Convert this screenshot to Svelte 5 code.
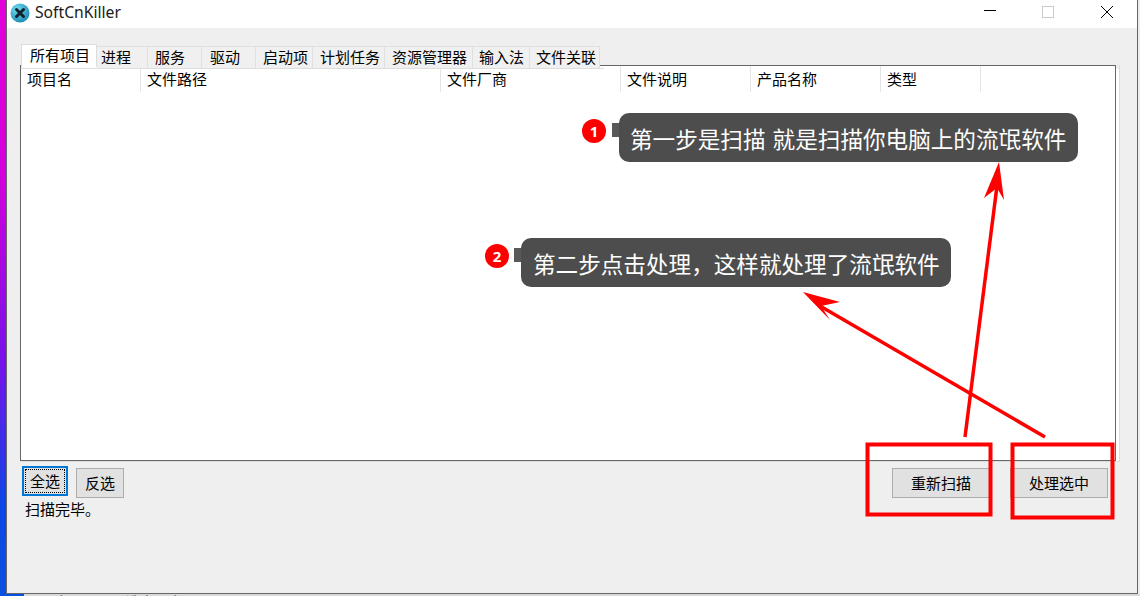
<script>
  const tabs = [
    { label: '所有项目', width: 76, pad: 8, active: true },
    { label: '进程', width: 51, pad: 4 },
    { label: '服务', width: 54, pad: 7 },
    { label: '驱动', width: 54, pad: 8 },
    { label: '启动项', width: 57, pad: 7 },
    { label: '计划任务', width: 72, pad: 7 },
    { label: '资源管理器', width: 88, pad: 7 },
    { label: '输入法', width: 57, pad: 6 },
    { label: '文件关联', width: 70, pad: 6 }
  ];

  const columns = [
    { label: '项目名', width: 120 },
    { label: '文件路径', width: 300 },
    { label: '文件厂商', width: 180 },
    { label: '文件说明', width: 130 },
    { label: '产品名称', width: 130 },
    { label: '类型', width: 100 }
  ];
</script>

<div class="screen">
  <div class="desktop">
    <div class="wallpaper"></div>
    <div class="window">
      <header class="titlebar">
        <div class="title">
          <svg class="app-icon" viewBox="0 0 20 20" aria-hidden="true">
            <defs>
              <radialGradient id="ball" cx="0.35" cy="0.3" r="0.8">
                <stop offset="0" stop-color="#6fdcf0" />
                <stop offset="1" stop-color="#1585ad" />
              </radialGradient>
            </defs>
            <circle cx="10" cy="10" r="9.5" fill="url(#ball)" />
            <path d="M6.5 6.5l7 7m0-7l-7 7" stroke="#14202e" stroke-width="3" stroke-linecap="round" />
          </svg>
          <span>SoftCnKiller</span>
        </div>
        <div class="controls">
          <button type="button" aria-label="最小化">
            <svg viewBox="0 0 14 14"><path d="M1 5.5h12" stroke="#000" fill="none" /></svg>
          </button>
          <button type="button" aria-label="最大化">
            <svg viewBox="0 0 14 14"><rect x="1.5" y="1.5" width="11" height="11" stroke="#ccc" fill="none" /></svg>
          </button>
          <button type="button" aria-label="关闭">
            <svg viewBox="0 0 14 14"><path d="M1 1l12 12M13 1L1 13" stroke="#000" fill="none" /></svg>
          </button>
        </div>
      </header>

      <div class="content">
        <div class="tabs">
          {#each tabs as tab}
            <div class="tab" class:active={tab.active} style:width="{tab.width}px" style:padding-left="{tab.pad}px">{tab.label}</div>
          {/each}
        </div>

        <div class="pane">
          <div class="list">
            <div class="list-head">
              {#each columns as col}
                <div class="col" style:width="{col.width}px">{col.label}</div>
              {/each}
            </div>
          </div>
        </div>

        <div class="actions">
          <button type="button" class="btn small focused"><span>全选</span></button>
          <button type="button" class="btn small">反选</button>
          <button type="button" class="btn wide push">重新扫描</button>
          <button type="button" class="btn wide">处理选中</button>
        </div>
        <div class="status">扫描完毕。</div>
      </div>
    </div>
    <div class="edge"></div>
  </div>

  <div class="explorer">
    <div class="explorer-side"></div>
    <div class="explorer-text">
      <span class="count">0 个项目</span>
      <span class="picked">选中 1 个项目</span>
      <span>2.27 MB</span>
    </div>
  </div>

  <svg class="marks" viewBox="0 0 1140 596" aria-hidden="true">
    <rect x="867.5" y="444.5" width="123" height="70" />
    <rect x="1012.5" y="444.5" width="100" height="73" />
    <path d="M965 437L997 186" />
    <path d="M1045 437L820 306" />
    <polygon class="head" points="999,162 1004,200 997,188 984,198" />
    <polygon class="head" points="803,292 840,302 821,306 830,320" />
  </svg>

  <div class="tip tip-one">
    <span class="badge">1</span>
    <span class="nub"></span>
    <span class="bubble">第一步是扫描 就是扫描你电脑上的流氓软件</span>
  </div>
  <div class="tip tip-two">
    <span class="badge">2</span>
    <span class="nub"></span>
    <span class="bubble">第二步点击处理，这样就处理了流氓软件</span>
  </div>
</div>

<style>
  :global(body) {
    margin: 0;
    overflow: hidden;
  }

  .screen {
    position: relative;
    width: 1140px;
    height: 596px;
    overflow: hidden;
    font-family: "Noto Sans CJK SC", "Noto Sans", sans-serif;
    font-size: 15px;
    color: #000;
  }

  .desktop {
    display: flex;
    height: 594px;
  }

  .wallpaper {
    width: 6px;
    background: linear-gradient(180deg, #e300d8 0%, #d200dc 30%, #7a10e8 60%, #0d46e6 85%, #0a50e0 100%);
  }

  .edge {
    flex: 1;
    background: #ececec;
  }

  .window {
    width: 1132px;
    box-sizing: border-box;
    display: flex;
    flex-direction: column;
    background: #efefef;
    border: 1px solid #666;
    border-width: 0 1px 1px 1px;
  }

  .titlebar {
    height: 28px;
    display: flex;
    justify-content: space-between;
    background: #fff;
  }

  .title {
    display: flex;
    align-items: center;
    gap: 5px;
    padding-left: 3px;
    font-family: "Noto Sans", sans-serif;
    font-size: 15.7px;
    line-height: 26px;
    color: #1a1a1a;
  }

  .app-icon {
    width: 20px;
    height: 20px;
    margin-top: -3px;
  }

  .title span {
    margin-top: -4px;
  }

  .controls {
    display: flex;
    padding-right: 1px;
  }

  .controls button {
    width: 58.5px;
    padding: 5px 0 0;
    border: 0;
    background: none;
    display: flex;
    justify-content: center;
  }

  .controls svg {
    width: 14px;
    height: 14px;
  }

  .content {
    flex: 1;
    display: flex;
    flex-direction: column;
    padding: 16px 0 0 13px;
  }

  .tabs {
    position: relative;
    z-index: 1;
    display: flex;
    align-items: flex-end;
    height: 25px;
    width: 583px;
    margin-left: 1px;
    box-sizing: border-box;
    border-bottom: 1px solid #ddd;
  }

  .tab {
    box-sizing: border-box;
    height: 22px;
    line-height: 20px;
    background: #f0f0f0;
    border: 1px solid #e0e0e0;
    border-width: 1px 1px 0 0;
    white-space: nowrap;
    overflow: hidden;
  }

  .tab.active {
    height: 23px;
    margin-bottom: 1px;
    line-height: 20px;
    background: #fff;
    border-width: 1px 1px 0 1px;
    border-color: #ddd;
  }

  .pane {
    height: 397px;
    width: 1100px;
    margin-top: -4px;
    box-sizing: border-box;
    padding-right: 3px;
    background: linear-gradient(#efefef 4px, #fff 4px);
    border-right: 1px solid #ddd;
    border-bottom: 1px solid #ddd;
  }

  .list {
    height: 100%;
    box-sizing: border-box;
    background: #fff;
    border: 1px solid #666;
  }

  .list-head {
    display: flex;
    height: 26px;
  }

  .col {
    box-sizing: border-box;
    padding: 2px 0 0 6px;
    line-height: 22px;
    background: #fff;
    border-right: 1px solid #e5e5e5;
  }

  .actions {
    display: flex;
    align-items: flex-start;
    height: 36px;
    padding-top: 4px;
    box-sizing: border-box;
  }

  .btn {
    box-sizing: border-box;
    height: 30px;
    padding: 0 0 2px;
    font: inherit;
    background: #e1e1e1;
    border: 1px solid #adadad;
    color: #000;
  }

  .small {
    width: 48px;
    margin-top: 2px;
  }

  .wide {
    width: 98px;
    margin-top: 2px;
  }

  .wide + .wide {
    margin-left: 20px;
  }

  .push {
    margin-left: 768px;
  }

  .focused {
    width: 46px;
    margin: 0 8px 0 2px;
    border: 2px solid #0078d7;
    padding: 1px;
  }

  .focused span {
    display: block;
    height: 22px;
    line-height: 22px;
    border: 1px dotted #000;
  }

  .status {
    padding-left: 5px;
    line-height: 22px;
  }

  .explorer {
    display: flex;
    height: 2px;
    background: #d9d9d9;
  }

  .explorer-side {
    width: 24px;
    background: #0a50e0;
  }

  .explorer-text {
    display: flex;
    padding-left: 19px;
    line-height: 14px;
    font-size: 14px;
    color: #333;
    white-space: nowrap;
  }

  .count {
    margin-right: 30px;
  }

  .picked {
    margin-right: 8px;
  }

  .marks {
    position: absolute;
    inset: 0;
    width: 1140px;
    height: 596px;
    pointer-events: none;
  }

  .marks rect,
  .marks path {
    fill: none;
    stroke: #ff0000;
    stroke-width: 3.5px;
  }

  .marks rect {
    stroke-width: 4px;
  }

  .marks .head {
    fill: #ff0000;
  }

  .tip {
    position: absolute;
    display: flex;
    align-items: flex-start;
  }

  .tip-one {
    left: 582px;
    top: 113px;
  }

  .tip-two {
    left: 485px;
    top: 238px;
  }

  .badge {
    width: 24px;
    height: 24px;
    margin: 6px 6px 0 0;
    border-radius: 50%;
    background: #ff0000;
    color: #fff;
    font-family: "Noto Sans", sans-serif;
    font-size: 15px;
    font-weight: 700;
    line-height: 24px;
    text-align: center;
  }

  .tip-two .badge {
    margin-right: 5px;
  }

  .nub {
    width: 7px;
    height: 14px;
    margin-top: 10px;
    background: #595959;
  }

  .bubble {
    height: 49px;
    padding: 0 11px 0 12px;
    border-radius: 10px;
    background: #4d4d4d;
    color: #fff;
    font-size: 22.6px;
    line-height: 52px;
    word-spacing: 2px;
    white-space: nowrap;
  }

  .tip-one .bubble {
    padding: 0 12px 0 11px;
  }
</style>
